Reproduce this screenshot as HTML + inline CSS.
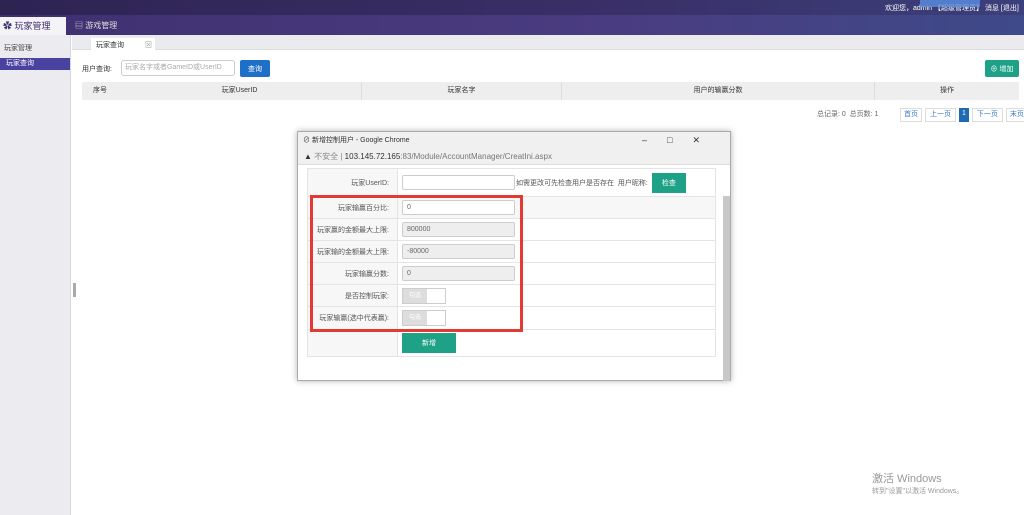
<!DOCTYPE html>
<html><head><meta charset="utf-8"><style>
*{margin:0;padding:0;box-sizing:border-box}
body{width:1024px;height:515px;overflow:hidden;background:#fff;font-family:"Liberation Sans","Noto Sans CJK SC",sans-serif;font-size:7px;color:#333;position:relative}
.a{position:absolute;white-space:nowrap}
.c{display:flex;align-items:center;justify-content:center}
td{border-bottom:1px solid #e4e4e4;height:22px;font-size:7px;color:#555;white-space:nowrap}
.lab{width:90px;text-align:right;padding-right:8px;background:#f7f7f7;border-right:1px solid #e4e4e4}
.inp{width:113px;height:15px;border:1px solid #ccc;background:#eee;font-size:7px;padding-left:4px;line-height:13px;margin-left:4px;border-radius:2px;color:#666}
.sw{width:44px;height:16px;border:1px solid #ccc;margin-left:4px;position:relative;background:#fff}
.sw div{width:24px;height:14px;background:#ddd;color:#fff;font-size:6px;text-align:center;line-height:14px}
</style></head><body>
<div class="a" style="left:0;top:0;width:1024px;height:15px;background:linear-gradient(90deg,#2e2452,#3a2f68 60%,#3b3f7a)"></div>
<div class="a" style="left:0;top:15px;width:1024px;height:20px;background:linear-gradient(90deg,#3f3070,#4a3c80 60%,#3e4a8a)"></div>
<div class="a" style="left:885px;top:3px;color:#fff;font-size:7px">欢迎您，admin 【超级管理员】 消息 [退出]</div>
<div class="a" style="left:920px;top:-2px;width:60px;height:9px;background:#5b8fe0;opacity:.8"></div>
<div class="a" style="left:0;top:17px;width:66px;height:18px;background:#f4f3f8;color:#3c2f6a;font-size:9px;line-height:18px;padding-left:3px">✿ 玩家管理</div>
<div class="a" style="left:75px;top:20px;color:#ddd;font-size:8px">▤ 游戏管理</div>
<div class="a" style="left:0;top:35px;width:71px;height:480px;background:#ecebf0;border-right:1px solid #d8d8e0"></div>
<div class="a" style="left:4px;top:43px;font-size:7px;color:#444">玩家管理</div>
<div class="a" style="left:0;top:58px;width:70px;height:12px;background:#4a42a0;color:#fff;font-size:7px;line-height:12px;padding-left:6px">玩家查询</div>
<div class="a" style="left:72px;top:35px;width:952px;height:15px;background:#ebebef;border-bottom:1px solid #ddd"></div>
<div class="a" style="left:91px;top:38px;width:64px;height:13px;background:#fff;font-size:7px;padding:2px 5px">玩家查询<span style="position:absolute;left:54px;color:#999">⊠</span></div>
<div class="a" style="left:82px;top:64px;font-size:7px">用户查询:</div>
<div class="a" style="left:121px;top:60px;width:114px;height:16px;border:1px solid #ccc;border-radius:3px;color:#aaa;font-size:7px;line-height:14px;padding-left:3px">玩家名字或者GameID或UserID</div>
<div class="a c" style="left:240px;top:60px;width:30px;height:17px;background:#1e6fc8;color:#fff;border-radius:2px">查询</div>
<div class="a c" style="left:985px;top:60px;width:34px;height:17px;background:#1fa187;color:#fff;border-radius:2px">⊕ 增加</div>
<div class="a" style="left:82px;top:82px;width:937px;height:18px;background:#eeeeee;display:flex;font-size:7px;line-height:18px;color:#333">
<div style="width:36px;text-align:center">序号</div><div style="width:244px;text-align:center;border-right:1px solid #ddd">玩家UserID</div><div style="width:200px;text-align:center;border-right:1px solid #ddd">玩家名字</div><div style="width:313px;text-align:center;border-right:1px solid #ddd">用户的输赢分数</div><div style="flex:1;text-align:center">操作</div></div>
<div class="a" style="left:817px;top:109px;color:#666">总记录: 0 &nbsp;总页数: 1</div>
<div class="a" style="left:900px;top:108px;display:flex;gap:3px;font-size:7px;line-height:10px">
<span style="border:1px solid #ddd;padding:1px 3px;color:#3a7ad0">首页</span><span style="border:1px solid #ddd;padding:1px 4px;color:#3a7ad0">上一页</span><span style="background:#1f6bb3;color:#fff;padding:1px 3px">1</span><span style="border:1px solid #ddd;padding:1px 4px;color:#3a7ad0">下一页</span><span style="border:1px solid #ddd;padding:1px 3px;color:#3a7ad0">末页</span></div>
<div class="a" style="left:297px;top:131px;width:434px;height:250px;background:#fff;border:1px solid #aaa;box-shadow:0 0 6px rgba(0,0,0,.3)">
<div style="height:17px;background:#f0f0f0;font-size:7px;line-height:17px;padding-left:5px;position:relative">⊘ 新增控制用户 - Google Chrome<span style="position:absolute;right:10px;font-size:9px;letter-spacing:20px">–□✕</span></div>
<div style="height:16px;background:#f0f0f0;font-size:8px;line-height:16px;padding-left:6px;color:#333;border-bottom:1px solid #ddd">▲ <span style="color:#888">不安全 |</span> 103.145.72.165<span style="color:#777">:83/Module/AccountManager/CreatIni.aspx</span></div>
<div style="position:absolute;right:0;top:64px;width:7px;height:185px;background:#c8c8c8"></div>
<table style="position:absolute;left:9px;top:36px;width:409px;border-collapse:collapse;border:1px solid #e4e4e4">
<tr style="height:28px"><td class="lab">玩家UserID:</td><td><div style="display:flex;align-items:center"><div class="inp" style="background:#fff;width:113px"></div><span style="margin-left:1px">如需更改可先检查用户是否存在 &nbsp;用户昵称:</span><div class="c" style="margin-left:4px;width:34px;height:20px;background:#1fa187;color:#fff">检查</div></div></td></tr>
<tr><td class="lab">玩家输赢百分比:</td><td style="background:#f7f7f7"><div class="inp" style="background:#fff">0</div></td></tr>
<tr><td class="lab">玩家赢的金额最大上限:</td><td><div class="inp">800000</div></td></tr>
<tr><td class="lab">玩家输的金额最大上限:</td><td><div class="inp">-80000</div></td></tr>
<tr><td class="lab">玩家输赢分数:</td><td><div class="inp">0</div></td></tr>
<tr><td class="lab">是否控制玩家:</td><td><div class="sw"><div>勾选</div></div></td></tr>
<tr style="height:23px"><td class="lab">玩家输赢(选中代表赢):</td><td><div class="sw"><div>勾选</div></div></td></tr>
<tr style="height:27px"><td class="lab"></td><td><div class="c" style="margin-left:4px;width:54px;height:20px;background:#1fa187;color:#fff">新增</div></td></tr>
</table>
<div style="position:absolute;left:12px;top:63px;width:213px;height:137px;border:3px solid #e53935"></div>
</div>
<div class="a" style="left:73px;top:283px;width:3px;height:14px;background:#aaa"></div>
<div class="a" style="left:872px;top:470px;color:#999;font-size:11px">激活 Windows</div>
<div class="a" style="left:872px;top:486px;color:#999;font-size:7px">转到"设置"以激活 Windows。</div>
</body></html>
